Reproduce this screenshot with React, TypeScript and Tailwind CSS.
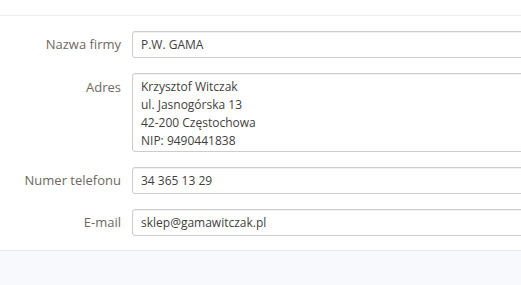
import React from 'react';

const label = 'w-[132px] shrink-0 pr-[11px] text-right text-[13px] text-[#6e6862]';
const field =
  'w-[420px] shrink-0 rounded-[3px] border border-[#cccccc] bg-white px-[8px] text-[12px] text-[#3f3f3f] shadow-[inset_0_1px_1px_rgba(0,0,0,0.06)]';

function Row({ name, value }: { name: string; value: string }) {
  return (
    <div className="flex items-center">
      <div className={label}>{name}</div>
      <div className={`${field} flex h-[27px] items-center`}>{value}</div>
    </div>
  );
}

export default function App() {
  return (
    <div
      className="w-[521px] h-[285px] overflow-hidden bg-[#f8f9fc]"
      style={{ fontFamily: '"Open Sans", "Noto Sans", sans-serif' }}
    >
      <div className="h-[16px] bg-white border-b border-[#ececec]" />
      <div className="flex flex-col gap-[15px] bg-white pt-[15px] pb-[14px] border-b border-[#e6e8ec]">
        <Row name="Nazwa firmy" value="P.W. GAMA" />
        <div className="flex items-start">
          <div className={`${label} pt-[5px]`}>Adres</div>
          <div className={`${field} h-[79px] pt-[4px] leading-[18px]`}>
            <div>Krzysztof Witczak</div>
            <div>ul. Jasnogórska 13</div>
            <div>42-200 Częstochowa</div>
            <div>NIP: 9490441838</div>
          </div>
        </div>
        <Row name="Numer telefonu" value="34 365 13 29" />
        <Row name="E-mail" value="sklep@gamawitczak.pl" />
      </div>
    </div>
  );
}
